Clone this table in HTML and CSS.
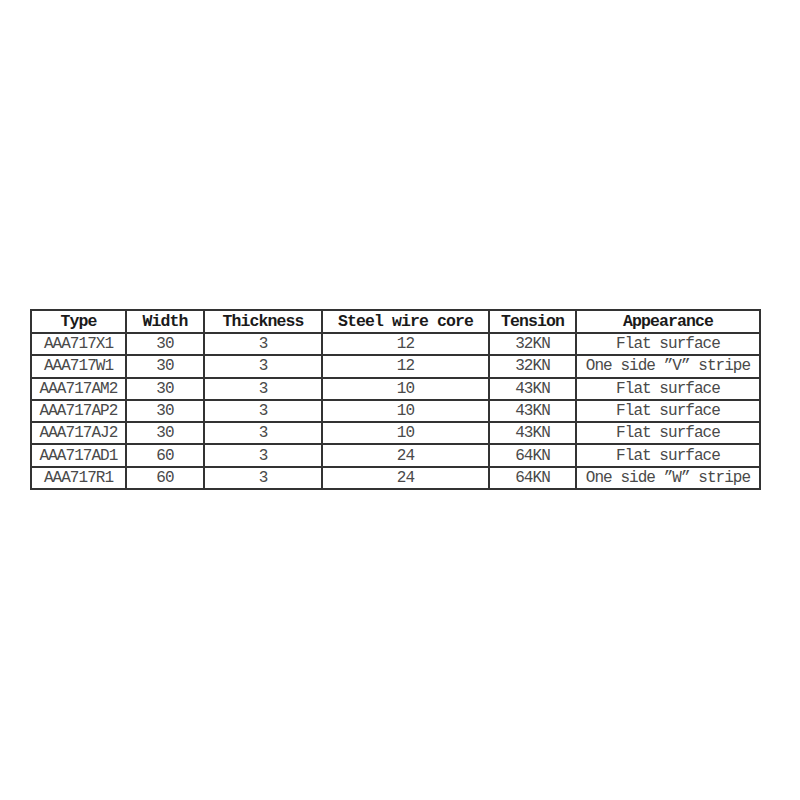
FILE: index.html
```html
<!DOCTYPE html>
<html>
<head>
<meta charset="utf-8">
<link rel="stylesheet" href="styles.css">
</head>
<body>
<div class="page">
<table class="spec">
  <colgroup>
    <col class="c1"><col class="c2"><col class="c3"><col class="c4"><col class="c5"><col class="c6">
  </colgroup>
  <thead>
    <tr><th>Type</th><th>Width</th><th>Thickness</th><th>Steel wire core</th><th>Tension</th><th>Appearance</th></tr>
  </thead>
  <tbody>
    <tr><td>AAA717X1</td><td>30</td><td>3</td><td>12</td><td>32KN</td><td>Flat surface</td></tr>
    <tr><td>AAA717W1</td><td>30</td><td>3</td><td>12</td><td>32KN</td><td>One side ”V” stripe</td></tr>
    <tr><td>AAA717AM2</td><td>30</td><td>3</td><td>10</td><td>43KN</td><td>Flat surface</td></tr>
    <tr><td>AAA717AP2</td><td>30</td><td>3</td><td>10</td><td>43KN</td><td>Flat surface</td></tr>
    <tr><td>AAA717AJ2</td><td>30</td><td>3</td><td>10</td><td>43KN</td><td>Flat surface</td></tr>
    <tr><td>AAA717AD1</td><td>60</td><td>3</td><td>24</td><td>64KN</td><td>Flat surface</td></tr>
    <tr><td>AAA717R1</td><td>60</td><td>3</td><td>24</td><td>64KN</td><td>One side ”W” stripe</td></tr>
  </tbody>
</table>
</div>
</body>
</html>
```

FILE: styles.css
```css
html, body {
  margin: 0;
  padding: 0;
  background: #ffffff;
}
.page {
  padding: 309px 0 0 30px;
}
.spec {
  border-collapse: collapse;
  table-layout: fixed;
  width: 729px;
  font-family: "Liberation Mono", "DejaVu Sans Mono", monospace;
}
.c1 { width: 95px; }
.c2 { width: 78px; }
.c3 { width: 118px; }
.c4 { width: 167px; }
.c5 { width: 87px; }
.c6 { width: 184px; }
.spec th, .spec td {
  border: 2px solid #333333;
  padding: 0;
  text-align: center;
  white-space: nowrap;
  overflow: hidden;
}
.spec th {
  height: 21px;
  font-size: 16.5px;
  letter-spacing: -0.9px;
  font-weight: bold;
  color: #1a1a1a;
  line-height: 21px;
}
.spec td {
  height: 20.3px;
  font-size: 16px;
  letter-spacing: -0.95px;
  color: #4a4a4a;
  line-height: 20px;
}
```
